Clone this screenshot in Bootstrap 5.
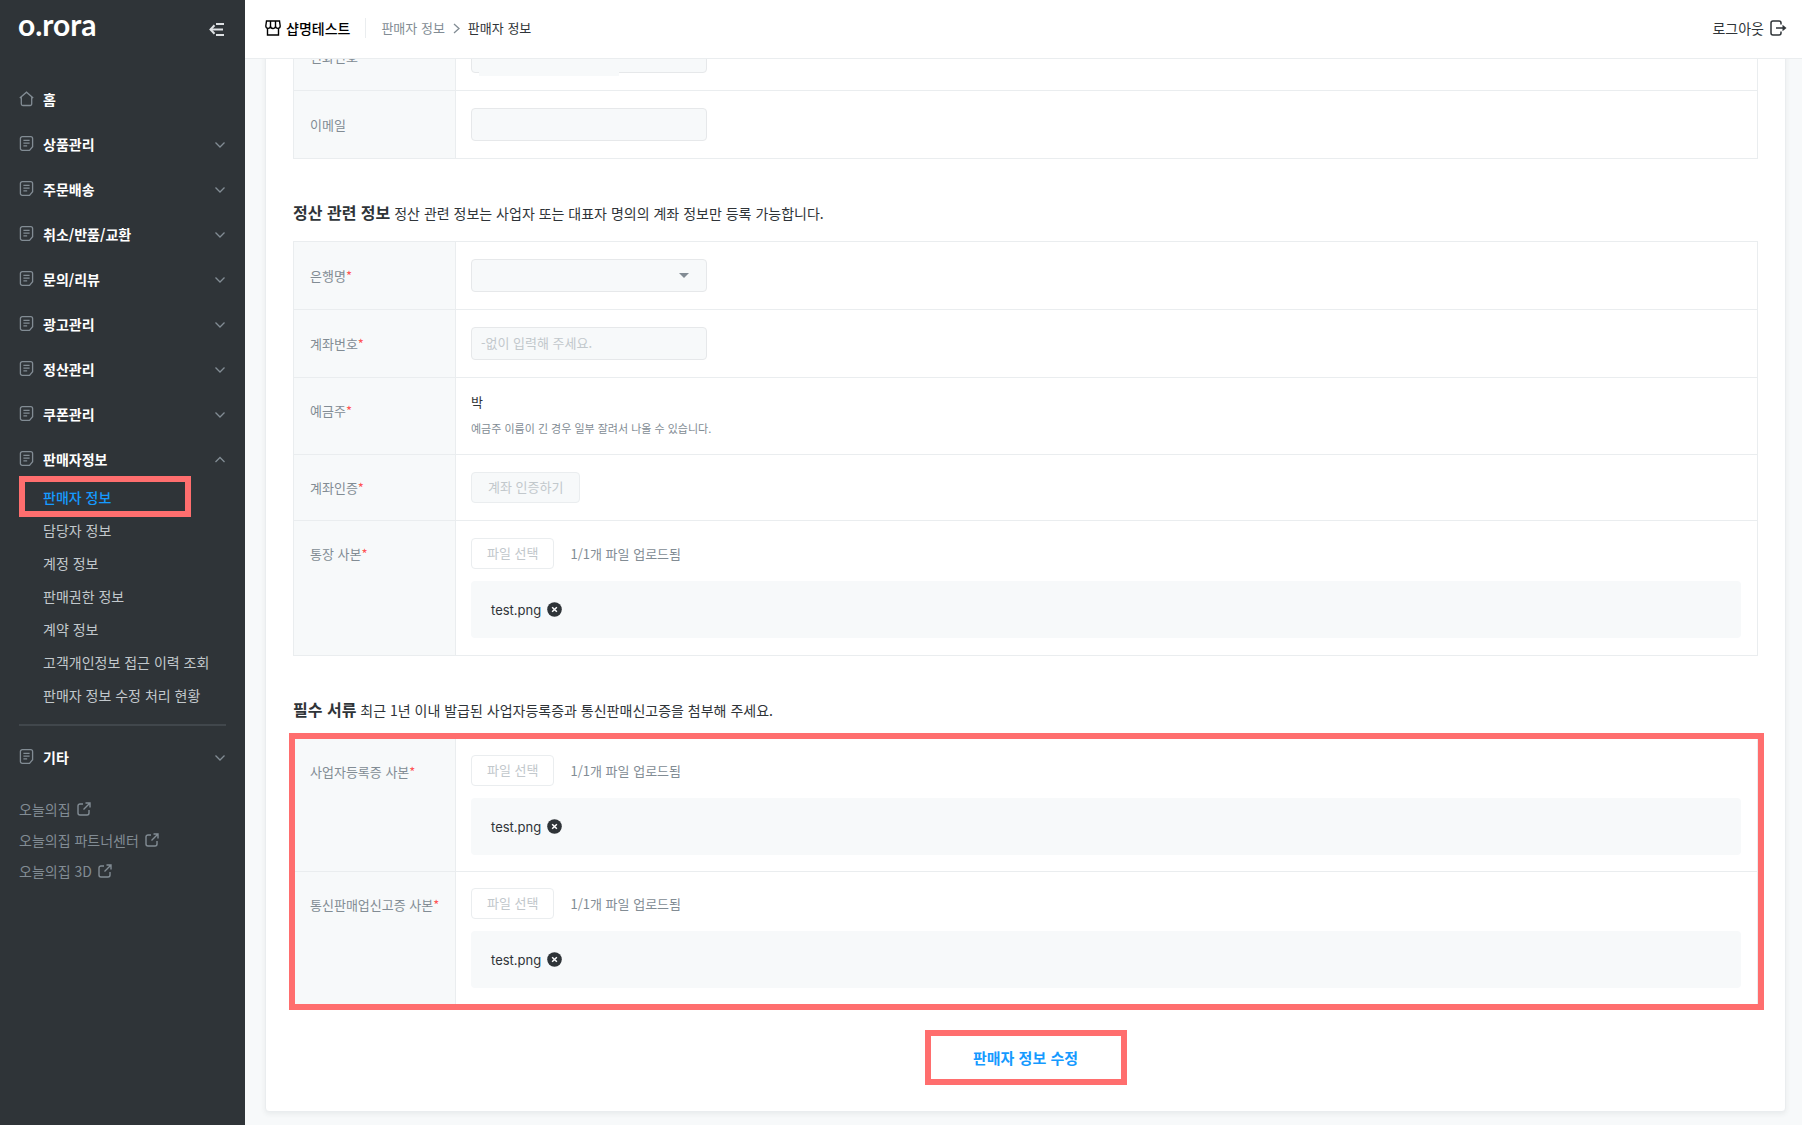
<!DOCTYPE html>
<html lang="ko">
<head>
<meta charset="utf-8">
<meta name="viewport" content="width=device-width, initial-scale=1">
<title>판매자 정보</title>
<link rel="stylesheet" href="https://cdn.jsdelivr.net/npm/bootstrap@5.3.0/dist/css/bootstrap.min.css">
<style>
  :root { --line:#eaedef; --pale:#f7f9fa; --muted:#828c94; --ink:#2f3438; --mark:#ff6e6e; --brand:#159aff; }
  body { font-family:"Noto Sans CJK KR",sans-serif; font-size:13px; line-height:20px; color:var(--ink); background:var(--pale); }
  svg { flex:none; fill:none; stroke:currentColor; }
  a { color:inherit; text-decoration:none; }

  .side { width:245px; background:var(--ink); color:#fff; padding:0 19px; font-size:14px; }
  .side-top { height:76px; padding:5px 1px 0 0; }
  .logo { font-family:Lato,sans-serif; font-size:30px; line-height:38px; font-weight:700; margin-left:-1px; }
  .side-item { height:45px; width:100%; padding:0; border:0; background:none; color:#fff; font-weight:700; gap:9px; }
  .side-item svg { color:var(--muted); }
  .side-item svg.ms-auto { margin-top:3px; }
  .side-sub { margin-top:-1px; }
  .side-sub a { height:33px; color:#c2c8cc; padding-left:24px; position:relative; }
  .side-sub a.current { color:var(--brand); font-weight:500; }
  .side-sub a.current::after { content:""; position:absolute; left:0; top:-4px; width:172px; height:41px; border:6px solid var(--mark); }
  .side-rule { height:2px; background:#41474c; margin:13px 0 8px; }
  .side-links { margin-top:14px; color:var(--muted); }
  .side-links a { height:31px; gap:6px; }

  .topbar { height:59px; background:#fff; border-bottom:1px solid var(--line); padding:0 15px 10px 20px; z-index:5; }
  .shop { font-size:14px; font-weight:500; gap:5px; color:#000; }
  .shop-split { width:1px; height:20px; background:var(--line); margin:0 15px; }
  .trail a { color:var(--muted); }
  .logout { font-size:14px; gap:6px; }

  .page { margin-top:-59px; padding:0 16px 14px 20px; }
  .panel { background:#fff; border:1px solid var(--line); border-radius:4px; box-shadow:0 2px 5px rgba(63,71,77,.08); padding:21px 27px 26px; }
  .info { width:100%; border-collapse:collapse; }
  .info th, .info td { border:1px solid var(--line); padding:17px 16px 17px 15px; }
  .info th { width:162px; background:var(--pale); font-weight:400; color:var(--muted); padding:0 0 0 16px; }
  .info th.at-top { vertical-align:top; padding-top:23px; }
  .info th i { color:#f55; font-style:normal; }
  .info td.owner { padding-top:14px; }
  .field { width:236px; height:33px; border:1px solid #e6e8ea; border-radius:4px; background-color:var(--pale); font-size:13px; padding:0 9px 2px; color:var(--ink); }
  .field::placeholder { color:#c2c8cc; opacity:1; }
  .pick { appearance:none; }
  .caret { right:18px; top:14px; border:5px solid transparent; border-top-color:var(--muted); border-bottom:0; pointer-events:none; }
  .veil { left:8px; top:8px; width:140px; height:28px; background:var(--pale); }
  .section-title { font-size:14px; line-height:24px; margin:41px 0 16px; font-weight:400; }
  .section-title strong { font-size:16px; font-weight:700; }
  .mini { height:31px; border:1px solid var(--line); border-radius:4px; background:#fff; color:#c2c8cc; font-size:13px; line-height:20px; padding:0 15px 2px; }
  .mini.filled { background:var(--pale); padding:0 16px 2px; }
  .count { margin-left:16px; color:var(--muted); }
  .files { height:57px; margin-top:12px; border-radius:4px; background:var(--pale); padding-left:20px; gap:6px; font-family:Inter,sans-serif; }
  .holder { line-height:20px; margin-bottom:8px; }
  .help { font-size:11px; line-height:17px; color:var(--muted); }
  .outlined::after { content:""; position:absolute; inset:-5px -6px -5px -4px; border:6px solid var(--mark); pointer-events:none; }
  .save { width:202px; height:55px; margin-top:25px; border:6px solid var(--mark); background:#fff; color:var(--brand); font-size:15px; font-weight:700; padding:0; }
  .x { border:0; background:none; padding:0; display:flex; color:var(--ink); }
</style>
<script src="https://cdn.jsdelivr.net/npm/bootstrap@5.3.0/dist/js/bootstrap.bundle.min.js"></script>
</head>
<body>
<svg class="d-none">
  <symbol id="doc" viewBox="0 0 16 18"><path d="M3.500 1.700h9a2 2 0 0 1 2 2v8.800l-3.300 3.800H3.500a2 2 0 0 1-2-2V3.700a2 2 0 0 1 2-2z" stroke-width="1.400"/><path d="M4.700 5.600h6.600M4.700 8.600h6.600M4.700 11.600h4" stroke-width="1.300"/></symbol>
  <symbol id="down" viewBox="0 0 12 8"><path d="M1.500 1.500 6 6l4.500-4.500" stroke-width="1.300"/></symbol>
  <symbol id="up" viewBox="0 0 12 8"><path d="M1.500 6 6 1.500 10.500 6" stroke-width="1.300"/></symbol>
  <symbol id="ext" viewBox="0 0 14 14"><path d="M6 2H3a2 2 0 0 0-2 2v7a2 2 0 0 0 2 2h7a2 2 0 0 0 2-2V8M8.500 1H13v4.500M13 1 6.500 7.500" stroke-width="1.400"/></symbol>
  <symbol id="del" viewBox="0 0 16 16"><circle cx="8" cy="8" r="7.800" fill="#2f3438" stroke="none"/><path d="m5.500 5.500 5 5m0-5-5 5" stroke="#fff" stroke-width="1.600"/></symbol>
</svg>

<div class="d-flex min-vh-100">
  <aside class="side flex-shrink-0">
    <div class="side-top d-flex justify-content-between align-items-start">
      <a href="#" class="logo">o.rora</a>
      <button class="x text-white mt-3" aria-label="메뉴 접기"><svg width="16" height="16" viewBox="0 0 16 16"><path d="M7 3h8M1.500 8.500H14M7 14h8" stroke-width="2" stroke="#dde0e3"/><path d="M5.500 4.200 1.500 8.500l4 4.300" stroke-width="2" stroke="#dde0e3"/></svg></button>
    </div>
    <nav>
      <a href="#" class="side-item d-flex align-items-center"><svg width="15" height="16" viewBox="0 0 15 16"><path d="M.8 7 7.500 1.200 14.200 7M2.300 6v7a1.500 1.500 0 0 0 1.500 1.500h7.400a1.500 1.500 0 0 0 1.500-1.500V6" stroke-width="1.300"/></svg>홈</a>
      <button class="side-item d-flex align-items-center"><svg width="15" height="17"><use href="#doc"/></svg>상품관리<svg class="ms-auto" width="12" height="8"><use href="#down"/></svg></button>
      <button class="side-item d-flex align-items-center"><svg width="15" height="17"><use href="#doc"/></svg>주문배송<svg class="ms-auto" width="12" height="8"><use href="#down"/></svg></button>
      <button class="side-item d-flex align-items-center"><svg width="15" height="17"><use href="#doc"/></svg>취소/반품/교환<svg class="ms-auto" width="12" height="8"><use href="#down"/></svg></button>
      <button class="side-item d-flex align-items-center"><svg width="15" height="17"><use href="#doc"/></svg>문의/리뷰<svg class="ms-auto" width="12" height="8"><use href="#down"/></svg></button>
      <button class="side-item d-flex align-items-center"><svg width="15" height="17"><use href="#doc"/></svg>광고관리<svg class="ms-auto" width="12" height="8"><use href="#down"/></svg></button>
      <button class="side-item d-flex align-items-center"><svg width="15" height="17"><use href="#doc"/></svg>정산관리<svg class="ms-auto" width="12" height="8"><use href="#down"/></svg></button>
      <button class="side-item d-flex align-items-center"><svg width="15" height="17"><use href="#doc"/></svg>쿠폰관리<svg class="ms-auto" width="12" height="8"><use href="#down"/></svg></button>
      <button class="side-item d-flex align-items-center"><svg width="15" height="17"><use href="#doc"/></svg>판매자정보<svg class="ms-auto" width="12" height="8"><use href="#up"/></svg></button>
      <div class="side-sub">
        <a href="#" class="current d-flex align-items-center">판매자 정보</a>
        <a href="#" class="d-flex align-items-center">담당자 정보</a>
        <a href="#" class="d-flex align-items-center">계정 정보</a>
        <a href="#" class="d-flex align-items-center">판매권한 정보</a>
        <a href="#" class="d-flex align-items-center">계약 정보</a>
        <a href="#" class="d-flex align-items-center">고객개인정보 접근 이력 조회</a>
        <a href="#" class="d-flex align-items-center">판매자 정보 수정 처리 현황</a>
      </div>
      <div class="side-rule"></div>
      <button class="side-item d-flex align-items-center"><svg width="15" height="17"><use href="#doc"/></svg>기타<svg class="ms-auto" width="12" height="8"><use href="#down"/></svg></button>
      <div class="side-links">
        <a href="#" class="d-flex align-items-center">오늘의집 <svg width="14" height="14"><use href="#ext"/></svg></a>
        <a href="#" class="d-flex align-items-center">오늘의집 파트너센터 <svg width="14" height="14"><use href="#ext"/></svg></a>
        <a href="#" class="d-flex align-items-center">오늘의집 3D <svg width="14" height="14"><use href="#ext"/></svg></a>
      </div>
    </nav>
  </aside>

  <div class="flex-grow-1">
    <header class="topbar sticky-top d-flex align-items-center">
      <div class="d-flex align-items-center w-100 pt-2">
        <a href="#" class="shop d-flex align-items-center"><svg width="16" height="16" viewBox="0 0 16 16" stroke-width="1.400"><path d="M1.500 1h13l.7 5a2.300 2.300 0 0 1-4.700 0 2.300 2.300 0 0 1-5 0A2.300 2.300 0 0 1 .8 6zM5.500 6V1M10.500 6V1M2.500 8.500V15h11V8.500"/></svg>샵명테스트</a>
        <span class="shop-split"></span>
        <nav class="trail d-flex align-items-center gap-2" aria-label="경로"><a href="#">판매자 정보</a><svg width="7" height="11" viewBox="0 0 7 11"><path d="m1 1 5 4.500L1 10" stroke="#828c94" stroke-width="1.300"/></svg><span>판매자 정보</span></nav>
        <a href="#" class="logout ms-auto d-flex align-items-center">로그아웃<svg width="17" height="16" viewBox="0 0 17 16"><path d="M11 4.500V3a2 2 0 0 0-2-2H3a2 2 0 0 0-2 2v10a2 2 0 0 0 2 2h6a2 2 0 0 0 2-2v-1.500M6 8h8.500" stroke-width="1.500"/><path d="M12.500 4.800 16.500 8l-4 3.200z" fill="currentColor" stroke="none"/></svg></a>
      </div>
    </header>

    <main class="page">
      <div class="panel">
        <table class="info">
          <tr><th><label for="tel">전화번호</label></th><td><div class="position-relative"><input class="field d-block" id="tel" type="tel" disabled><span class="veil position-absolute"></span></div></td></tr>
          <tr><th><label for="mail">이메일</label></th><td><input class="field d-block" id="mail" type="email" disabled></td></tr>
        </table>

        <h2 class="section-title"><strong>정산 관련 정보</strong> 정산 관련 정보는 사업자 또는 대표자 명의의 계좌 정보만 등록 가능합니다.</h2>
        <table class="info">
          <tr><th><label for="bank">은행명<i>*</i></label></th><td><div class="position-relative d-inline-block align-top"><select class="field pick d-block" id="bank" disabled><option></option></select><span class="caret position-absolute"></span></div></td></tr>
          <tr><th><label for="acct">계좌번호<i>*</i></label></th><td><input class="field d-block" id="acct" type="text" placeholder="-없이 입력해 주세요." disabled></td></tr>
          <tr><th class="at-top">예금주<i>*</i></th><td class="owner"><div class="holder">박</div><div class="help">예금주 이름이 긴 경우 일부 잘려서 나올 수 있습니다.</div></td></tr>
          <tr><th>계좌인증<i>*</i></th><td><button class="mini filled d-block" disabled>계좌 인증하기</button></td></tr>
          <tr><th class="at-top">통장 사본<i>*</i></th><td>
            <div class="d-flex align-items-center"><button class="mini" disabled>파일 선택</button><span class="count">1/1개 파일 업로드됨</span></div>
            <div class="files d-flex align-items-center">test.png<button class="x" aria-label="삭제"><svg width="15" height="15"><use href="#del"/></svg></button></div></td></tr>
        </table>

        <h2 class="section-title"><strong>필수 서류</strong> 최근 1년 이내 발급된 사업자등록증과 통신판매신고증을 첨부해 주세요.</h2>
        <div class="outlined position-relative">
          <table class="info">
            <tr><th class="at-top">사업자등록증 사본<i>*</i></th><td class="py-3">
              <div class="d-flex align-items-center"><button class="mini" disabled>파일 선택</button><span class="count">1/1개 파일 업로드됨</span></div>
              <div class="files d-flex align-items-center">test.png<button class="x" aria-label="삭제"><svg width="15" height="15"><use href="#del"/></svg></button></div></td></tr>
            <tr><th class="at-top">통신판매업신고증 사본<i>*</i></th><td class="py-3">
              <div class="d-flex align-items-center"><button class="mini" disabled>파일 선택</button><span class="count">1/1개 파일 업로드됨</span></div>
              <div class="files d-flex align-items-center">test.png<button class="x" aria-label="삭제"><svg width="15" height="15"><use href="#del"/></svg></button></div></td></tr>
          </table>
        </div>
        <div class="text-center"><button class="save d-inline-block align-top">판매자 정보 수정</button></div>
      </div>
    </main>
  </div>
</div>
</body>
</html>
